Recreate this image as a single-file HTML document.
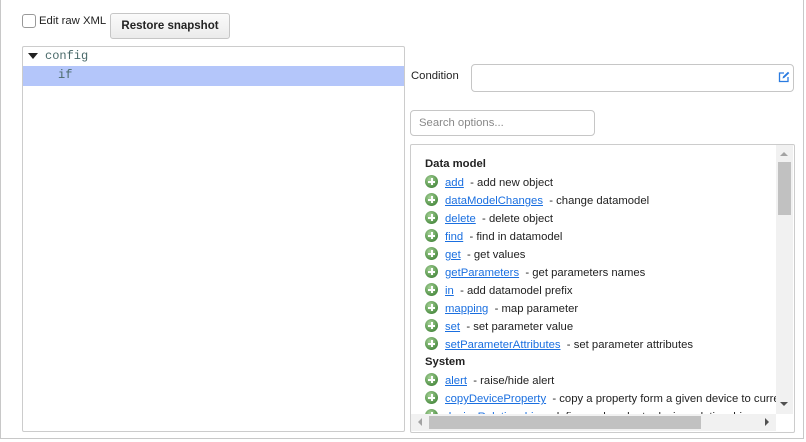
<!DOCTYPE html>
<html><head><style>
body{margin:0;width:806px;height:442px;position:relative;font-family:"Liberation Sans",Arial,sans-serif;font-size:11.3px;color:#222;background:#fff;overflow:hidden}
.a{position:absolute}
.frame{left:0;top:0;width:802px;height:438px;border:1px solid #c8c8c8;border-top:none}
.mono{font-family:"Liberation Mono",monospace;font-size:12px;color:#4a6a6a}
.row{position:absolute;left:14px;height:18px;line-height:18px;white-space:nowrap;font-size:11.3px;margin-top:1px}
.row a{color:#1a6fe0;text-decoration:underline}
.ic{display:inline-block;width:13px;height:13px;border-radius:50%;background:radial-gradient(circle at 40% 35%,#a9d49a,#4f8f45 70%,#3f7236);vertical-align:-2px;margin-right:7px;position:relative}
.ic:before{content:"";position:absolute;left:3px;top:5.5px;width:7px;height:2px;background:#fff}
.ic:after{content:"";position:absolute;left:5.5px;top:3px;width:2px;height:7px;background:#fff}
.h{font-weight:bold}
</style></head><body>
<div class="a frame"></div>
<div class="a" style="left:22px;top:14px;width:12px;height:12px;border:1px solid #999;border-radius:3px;background:#fff"></div>
<div class="a" style="left:39px;top:15px">Edit raw XML</div>
<div class="a" style="left:110px;top:13px;width:118px;height:24px;border:1px solid #c6c6c6;border-radius:3px;background:linear-gradient(#fafafa,#ebebeb);font-weight:bold;font-size:11.5px;line-height:25px;text-align:center">Restore snapshot</div>
<div class="a" style="left:22px;top:46px;width:381px;height:384px;border:1px solid #ccc;border-radius:2px"></div>
<div class="a" style="left:28px;top:53px;width:0;height:0;border-left:5px solid transparent;border-right:5px solid transparent;border-top:6px solid #222"></div>
<div class="a mono" style="left:45px;top:49px">config</div>
<div class="a" style="left:23px;top:66px;width:381px;height:20px;background:#b4c6fa"></div>
<div class="a mono" style="left:58px;top:68px">if</div>
<div class="a" style="left:411px;top:70px">Condition</div>
<div class="a" style="left:471px;top:64px;width:321px;height:26px;border:1px solid #c6c6c6;border-radius:4px"></div>
<svg class="a" style="left:778px;top:71px" width="12" height="12" viewBox="0 0 12 12"><path d="M6 2H1.5v8.5H10V6" fill="none" stroke="#2a7be0" stroke-width="1.3"/><path d="M4.5 7.5l.5-2L10 .8l1.3 1.3-5 4.8z" fill="#2a7be0"/></svg>
<div class="a" style="left:410px;top:110px;border:1px solid #c6c6c6;border-radius:4px;color:#888;line-height:25px;padding-left:8px;box-sizing:border-box;width:185px;height:26px">Search options...</div>
<div class="a" style="left:410px;top:144px;width:383px;height:287px;border:1px solid #ccc;border-radius:2px;overflow:hidden">
 <div class="a" style="left:0;top:0;width:365px;height:269px;overflow:hidden">
  <div class="row h" style="top:9px">Data model</div>
  <div class="row" style="top:28px"><span class="ic"></span><a>add</a>&nbsp; - add new object</div>
  <div class="row" style="top:46px"><span class="ic"></span><a>dataModelChanges</a>&nbsp; - change datamodel</div>
  <div class="row" style="top:64px"><span class="ic"></span><a>delete</a>&nbsp; - delete object</div>
  <div class="row" style="top:82px"><span class="ic"></span><a>find</a>&nbsp; - find in datamodel</div>
  <div class="row" style="top:100px"><span class="ic"></span><a>get</a>&nbsp; - get values</div>
  <div class="row" style="top:118px"><span class="ic"></span><a>getParameters</a>&nbsp; - get parameters names</div>
  <div class="row" style="top:136px"><span class="ic"></span><a>in</a>&nbsp; - add datamodel prefix</div>
  <div class="row" style="top:154px"><span class="ic"></span><a>mapping</a>&nbsp; - map parameter</div>
  <div class="row" style="top:172px"><span class="ic"></span><a>set</a>&nbsp; - set parameter value</div>
  <div class="row" style="top:190px"><span class="ic"></span><a>setParameterAttributes</a>&nbsp; - set parameter attributes</div>
  <div class="row h" style="top:207px">System</div>
  <div class="row" style="top:226px"><span class="ic"></span><a>alert</a>&nbsp; - raise/hide alert</div>
  <div class="row" style="top:244px"><span class="ic"></span><a>copyDeviceProperty</a>&nbsp; - copy a property form a given device to current</div>
  <div class="row" style="top:262px"><span class="ic"></span><a>deviceRelationship</a>&nbsp; - define and evaluate device relationship</div>
 </div>
 <div class="a" style="left:365px;top:0;width:17px;height:269px;background:#f1f1f1"></div>
 <div class="a" style="left:369px;top:7px;border-left:4px solid transparent;border-right:4px solid transparent;border-bottom:4px solid #a3a3a3"></div>
 <div class="a" style="left:367px;top:17px;width:13px;height:53px;background:#c1c1c1"></div>
 <div class="a" style="left:369px;top:257px;border-left:4px solid transparent;border-right:4px solid transparent;border-top:4px solid #505050"></div>
 <div class="a" style="left:0;top:269px;width:365px;height:17px;background:#f1f1f1"></div>
 <div class="a" style="left:18px;top:271px;width:272px;height:13px;background:#c1c1c1"></div>
 <div class="a" style="left:7px;top:273px;border-top:4px solid transparent;border-bottom:4px solid transparent;border-right:4px solid #a3a3a3"></div>
 <div class="a" style="left:354px;top:273px;border-top:4px solid transparent;border-bottom:4px solid transparent;border-left:4px solid #505050"></div>
</div>
</body></html>
